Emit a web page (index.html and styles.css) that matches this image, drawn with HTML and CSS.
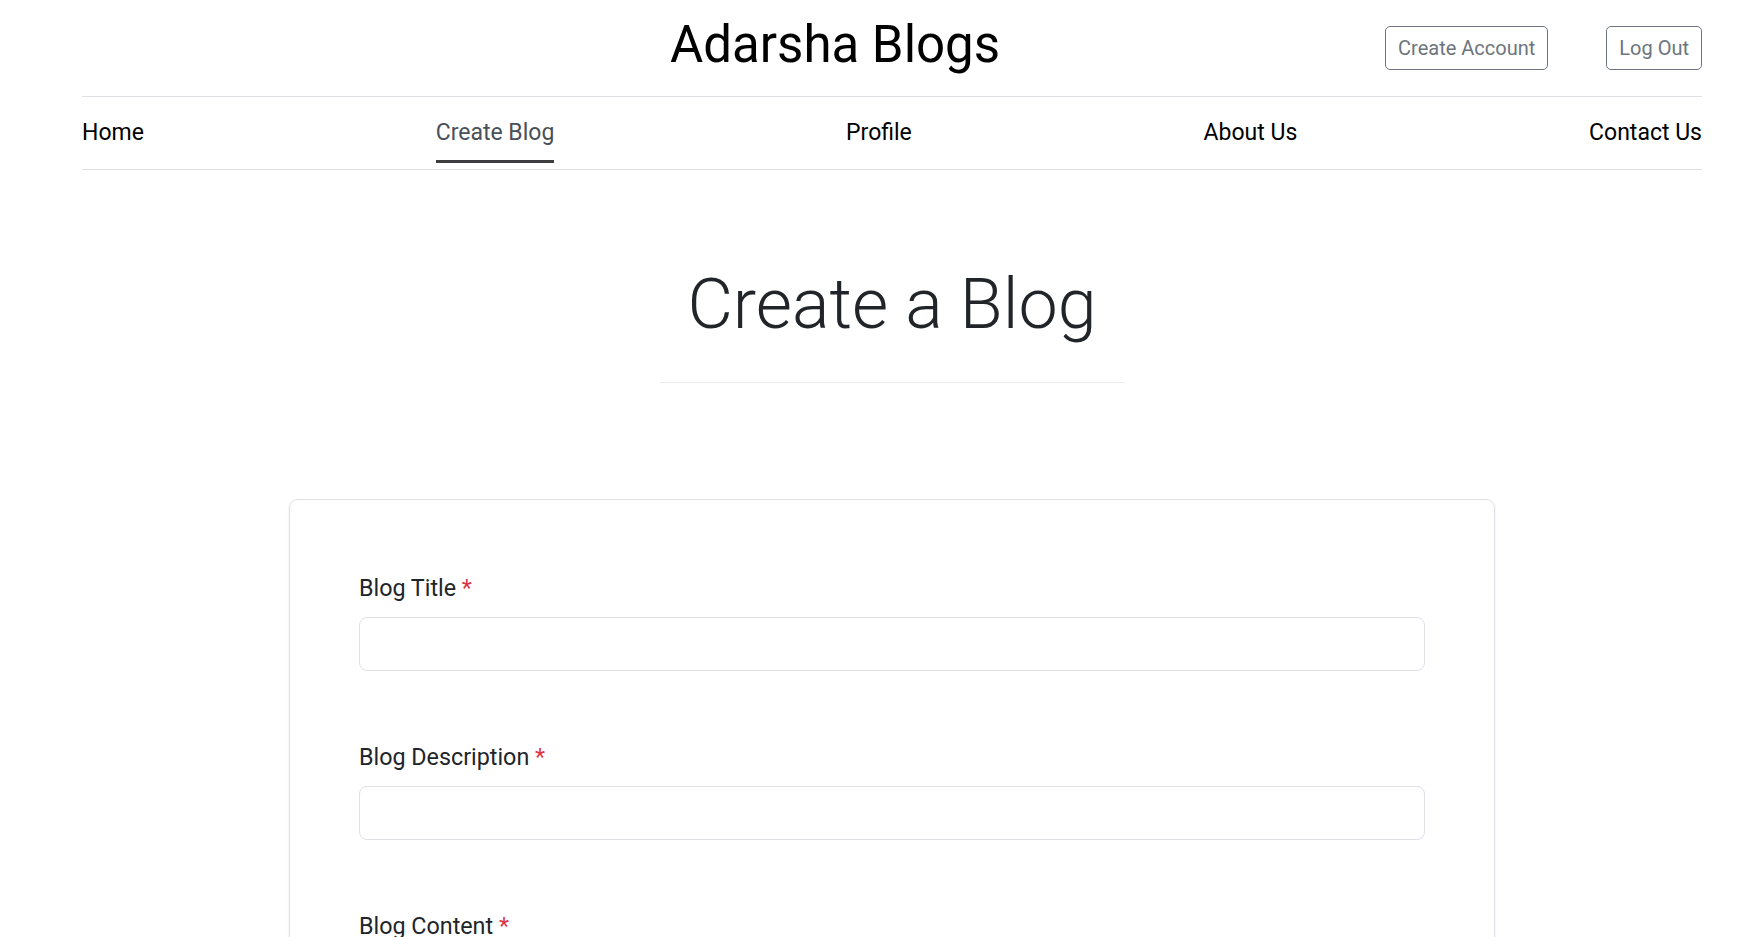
FILE: index.html
```html
<!DOCTYPE html>
<html lang="en">
<head>
<meta charset="utf-8">
<title>Adarsha Blogs - Create Blog</title>
<link rel="stylesheet" href="styles.css">
</head>
<body>
<div class="page">
  <header class="topbar">
    <h1 class="brand">Adarsha Blogs</h1>
    <div class="actions">
      <a class="btn-outline" href="#">Create Account</a>
      <a class="btn-outline" href="#">Log Out</a>
    </div>
  </header>
  <nav class="mainnav">
    <a class="navlink" href="#">Home</a>
    <a class="navlink active" href="#">Create Blog</a>
    <a class="navlink" href="#">Profile</a>
    <a class="navlink" href="#">About Us</a>
    <a class="navlink" href="#">Contact Us</a>
  </nav>
  <main class="content">
    <h2 class="page-title">Create a Blog</h2>
    <hr class="title-rule">
    <form class="card">
      <div class="field">
        <label class="field-label">Blog Title <span class="req">*</span></label>
        <input class="field-input" type="text">
      </div>
      <div class="field">
        <label class="field-label">Blog Description <span class="req">*</span></label>
        <input class="field-input" type="text">
      </div>
      <div class="field">
        <label class="field-label">Blog Content <span class="req">*</span></label>
        <textarea class="field-input area"></textarea>
      </div>
    </form>
  </main>
</div>
</body>
</html>
```
FILE: styles.css
```css
* { box-sizing: border-box; }
html, body { margin: 0; padding: 0; background: #fff; }
body {
  font-family: Roboto, "Liberation Sans", Arial, sans-serif;
  color: #212529;
}
.page {
  padding: 0 54px 0 82px;
}
.topbar {
  display: flex;
  align-items: center;
  height: 97px;
  border-bottom: 1px solid #dee2e6;
}
.brand {
  margin: 0 0 6px 588px;
  font-size: 51px;
  font-weight: 400;
  line-height: 62px;
  color: #000;
}
.actions {
  margin-left: auto;
  display: flex;
  gap: 58px;
}
.btn-outline {
  display: inline-block;
  font-size: 20px;
  line-height: 30px;
  padding: 6px 12px;
  border: 1px solid #6c757d;
  border-radius: 5px;
  color: #6c757d;
  text-decoration: none;
}
.mainnav {
  display: flex;
  justify-content: space-between;
  padding: 19px 0 6px;
  border-bottom: 1px solid #dee2e6;
}
.navlink {
  font-size: 23px;
  line-height: 34px;
  padding-bottom: 10px;
  border-bottom: 3px solid transparent;
  color: #000;
  text-decoration: none;
}
.navlink.active {
  color: #495057;
  border-bottom-color: #3d3d3f;
}
.content {
  display: flex;
  flex-direction: column;
  align-items: center;
}
.page-title {
  margin: 92px 0 0;
  font-size: 70px;
  font-weight: 300;
  line-height: 84px;
  color: #212529;
}
.title-rule {
  width: 465px;
  margin: 36px 0 0;
  border: 0;
  border-top: 1px solid #e9ecef;
}
.card {
  margin-top: 116px;
  width: 1206px;
  padding: 71px 69px 40px;
  border: 1px solid #dee2e6;
  border-radius: 9px;
  box-shadow: 0 1px 3px rgba(0,0,0,0.06);
  display: flex;
  flex-direction: column;
  gap: 69px;
}
.field {
  display: flex;
  flex-direction: column;
  gap: 12px;
}
.field-label {
  font-size: 23.3px;
  line-height: 34px;
  color: #212529;
}
.req { color: #dc3545; }
.field-input {
  height: 54px;
  border: 1px solid #dee2e6;
  border-radius: 8px;
  font: inherit;
  padding: 0 16px;
  background: #fff;
}
.area {
  height: 200px;
  resize: none;
}
```
